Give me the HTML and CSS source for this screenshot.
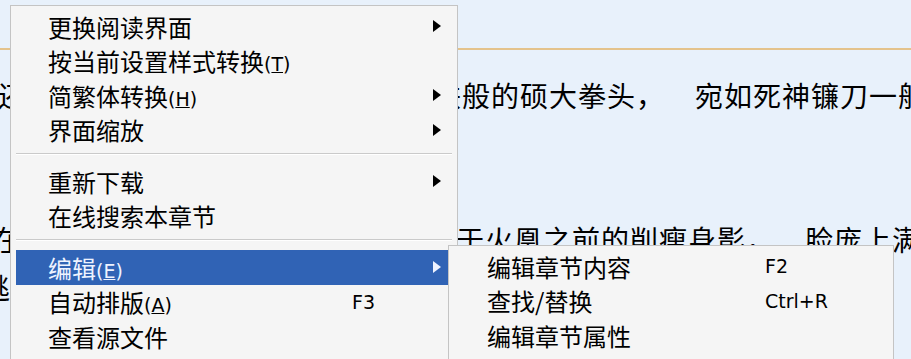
FILE: index.html
```html
<!DOCTYPE html>
<html lang="zh-CN">
<head>
    <meta charset="UTF-8">
    <title>阅读器 - 右键菜单</title>
    <link rel="stylesheet" href="styles.css">
</head>
<body>
    <div class="reader">
        <div class="reader-head"></div>
        <div class="reader-text">
            <p class="line l1">还未等他反应过来，只见那犹如钢铁般的硕大拳头，<span class="gap"></span>宛如死神镰刀一般</p>
            <p class="line"></p>
            <p class="line"></p>
            <p class="line l2">在场的所有人都呆呆地望着那道站立于火凰之前的削瘦身影，<span class="gap"></span>脸庞上满是震惊</p>
            <p class="line l3">逃过这一劫的众人</p>
        </div>
    </div>

    <!-- context menu -->
    <div class="menu main-menu">
        <div class="item"><span class="label">更换阅读界面</span><span class="key"></span><span class="arrow"></span></div>
        <div class="item"><span class="label">按当前设置样式转换<span class="mn">(<u>T</u>)</span></span><span class="key"></span></div>
        <div class="item"><span class="label">简繁体转换<span class="mn">(<u>H</u>)</span></span><span class="key"></span><span class="arrow"></span></div>
        <div class="item"><span class="label">界面缩放</span><span class="key"></span><span class="arrow"></span></div>
        <div class="sep"></div>
        <div class="item"><span class="label">重新下载</span><span class="key"></span><span class="arrow"></span></div>
        <div class="item"><span class="label">在线搜索本章节</span><span class="key"></span></div>
        <div class="sep"></div>
        <div class="item active"><span class="label">编辑<span class="mn">(<u>E</u>)</span></span><span class="key"></span><span class="arrow"></span></div>
        <div class="item"><span class="label">自动排版<span class="mn">(<u>A</u>)</span></span><span class="key">F3</span></div>
        <div class="item"><span class="label">查看源文件</span><span class="key"></span></div>
    </div>

    <div class="menu sub-menu">
        <div class="item"><span class="label">编辑章节内容</span><span class="key">F2</span></div>
        <div class="item"><span class="label">查找/替换</span><span class="key">Ctrl+R</span></div>
        <div class="item"><span class="label">编辑章节属性</span><span class="key"></span></div>
    </div>
</body>
</html>
```

FILE: styles.css
```css
:root {
    --page-bg: #e8f1fb;
    --head-line: #e4c38c;
    --menu-bg: #f5f5f5;
    --menu-border: #c4c4c4;
    --sep-color: #cacaca;
    --hi-color: #3063b5;
}

* {
    box-sizing: border-box;
    margin: 0;
    padding: 0;
}

body {
    width: 911px;
    height: 359px;
    overflow: hidden;
    background-color: var(--page-bg);
    font-family: "Noto Sans CJK SC", "DejaVu Sans", sans-serif;
    color: #000;
}

.reader-head {
    height: 50px;
    border-bottom: 2px solid var(--head-line);
}

.reader-text {
    padding-top: 21px;
}

.line {
    height: 48px;
    line-height: 48px;
    font-size: 28px;
    letter-spacing: 1px;
    white-space: nowrap;
    overflow: hidden;
}

.line .gap {
    display: inline-block;
    width: 30px;
}

.l1 { margin-left: -2px; }
.l2 { margin-left: -8px; }
.l3 { margin-left: -18px; }

/* menus sit over the reading page */
.menu {
    position: absolute;
    display: flex;
    flex-direction: column;
    background: var(--menu-bg);
    border: 1px solid var(--menu-border);
    padding: 3px 0;
    font-size: 24px;
}

.main-menu {
    left: 10px;
    top: 5px;
    width: 448px;
    height: 354px;
    border-bottom: none;
}

.sub-menu {
    left: 448px;
    top: 245px;
    width: 446px;
    height: 114px;
    border-bottom: none;
}

.item {
    display: flex;
    align-items: center;
    height: 34.5px;
    margin: 0 5px;
    padding: 0 11px 0 32px;
    white-space: nowrap;
}

.main-menu .label {
    flex: 0 0 304px;
}

.sub-menu .item {
    padding-left: 33px;
}

.sub-menu .label {
    flex: 0 0 278px;
}

.key {
    flex: 1;
    font-family: "DejaVu Sans", sans-serif;
    font-size: 19px;
}

.mn {
    font-family: "DejaVu Sans", sans-serif;
    font-size: 19px;
}

.arrow {
    width: 0;
    height: 0;
    border-left: 8px solid #000;
    border-top: 6px solid transparent;
    border-bottom: 6px solid transparent;
}

.item.active {
    background: var(--hi-color);
    color: #eef3ff;
}

.item.active .arrow {
    border-left-color: #eef3ff;
}

.sep {
    height: 1px;
    margin: 6px 5px 9px;
    background: var(--sep-color);
    border-bottom: 1px solid #fff;
    box-sizing: content-box;
}
```
